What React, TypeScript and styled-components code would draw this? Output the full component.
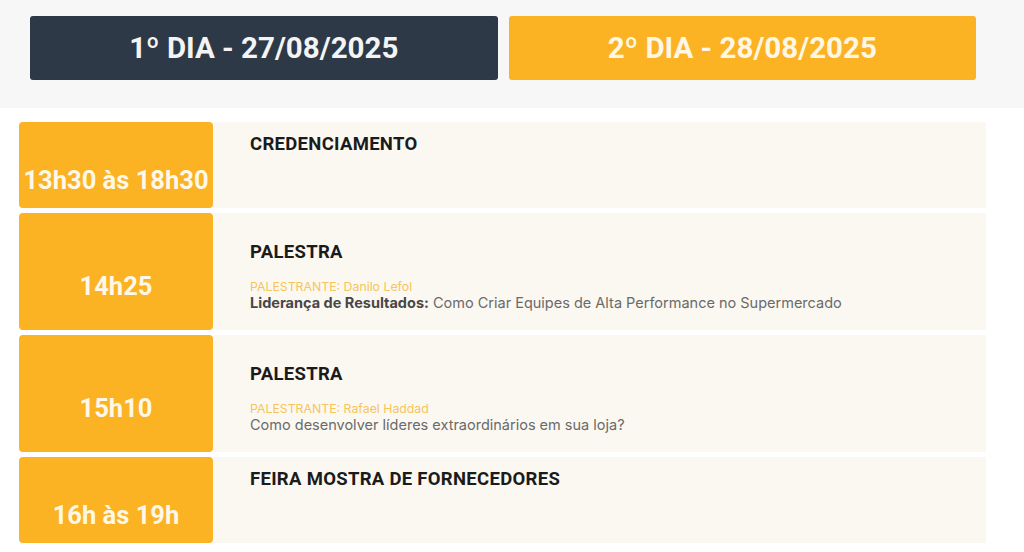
import React from 'react';
import styled, { createGlobalStyle } from 'styled-components';

const GlobalStyle = createGlobalStyle`
  body {
    margin: 0;
    background: #ffffff;
    font-family: Roboto, "Liberation Sans", Arial, sans-serif;
  }
`;

const Page = styled.div`
  width: 1024px;
  height: 552px;
  overflow: hidden;
`;

const DayBar = styled.div`
  background: #f7f7f7;
  padding: 16px 48px 28px 30px;
  display: grid;
  grid-template-columns: 1fr 1fr;
  gap: 11px;
`;

const DayButton = styled.button<{ $active?: boolean }>`
  height: 64px;
  border: none;
  border-radius: 3px;
  background: ${p => (p.$active ? '#2e3947' : '#fbb223')};
  color: ${p => (p.$active ? '#f4f4f4' : '#fff7e3')};
  font-family: Roboto, "Liberation Sans", Arial, sans-serif;
  font-weight: 700;
  font-size: 29.5px;
  cursor: pointer;
`;

const Schedule = styled.div`
  padding: 14px 38px 0 19px;
  display: flex;
  flex-direction: column;
  gap: 5px;
`;

const Row = styled.div<{ $tall?: boolean }>`
  display: flex;
  height: ${p => (p.$tall ? '117px' : '86px')};
`;

const Time = styled.div`
  width: 194px;
  flex-shrink: 0;
  background: #fbb223;
  border-radius: 4px;
  color: #fff8e8;
  font-weight: 700;
  font-size: 25.5px;
  display: flex;
  align-items: center;
  justify-content: center;
  padding-top: 29px;
  box-sizing: border-box;
  white-space: nowrap;
`;

const Content = styled.div<{ $talk?: boolean }>`
  flex: 1;
  background: #fbf8f1;
  padding: ${p => (p.$talk ? '28px' : '11px')} 24px 0 37px;
`;

const Title = styled.h3<{ $talk?: boolean }>`
  margin: 0 0 ${p => (p.$talk ? '16px' : '0')};
  font-size: 18.5px;
  letter-spacing: 0.3px;
  font-weight: 700;
  color: #1b1b1b;
`;

const Speaker = styled.div`
  font-family: Inter, Roboto, sans-serif;
  font-size: 12.3px;
  color: #f6c45c;
`;

const Description = styled.div`
  font-family: Inter, Roboto, sans-serif;
  font-size: 14.5px;
  color: #6a6a6a;

  strong {
    color: #474747;
    font-weight: 700;
  }
`;

type Item = {
  time: string;
  title: string;
  speaker?: string;
  lead?: string;
  text?: string;
};

const items: Item[] = [
  { time: '13h30 às 18h30', title: 'CREDENCIAMENTO' },
  {
    time: '14h25',
    title: 'PALESTRA',
    speaker: 'Danilo Lefol',
    lead: 'Liderança de Resultados:',
    text: 'Como Criar Equipes de Alta Performance no Supermercado',
  },
  {
    time: '15h10',
    title: 'PALESTRA',
    speaker: 'Rafael Haddad',
    text: 'Como desenvolver líderes extraordinários em sua loja?',
  },
  { time: '16h às 19h', title: 'FEIRA MOSTRA DE FORNECEDORES' },
];

const App: React.FC = () => {
  return (
    <Page>
      <GlobalStyle />
      <DayBar>
        <DayButton $active>1º DIA - 27/08/2025</DayButton>
        <DayButton>2º DIA - 28/08/2025</DayButton>
      </DayBar>
      <Schedule>
        {items.map(item => {
          const talk = !!item.speaker;
          return (
            <Row key={item.time} $tall={talk}>
              <Time>{item.time}</Time>
              <Content $talk={talk}>
                <Title $talk={talk}>{item.title}</Title>
                {talk && (
                  <>
                    <Speaker>PALESTRANTE: {item.speaker}</Speaker>
                    <Description>
                      {item.lead && <strong>{item.lead}</strong>} {item.text}
                    </Description>
                  </>
                )}
              </Content>
            </Row>
          );
        })}
      </Schedule>
    </Page>
  );
};

export default App;
